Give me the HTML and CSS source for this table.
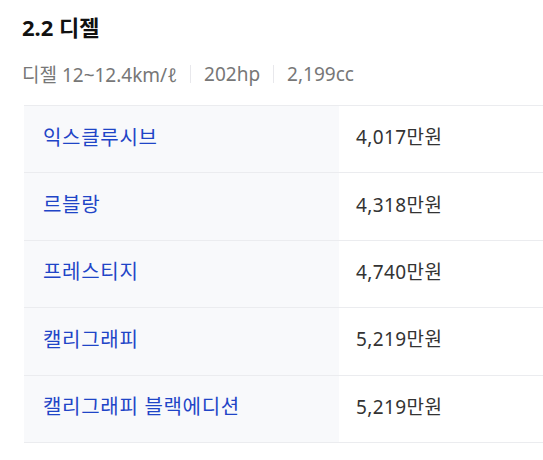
FILE: index.html
```html
<!DOCTYPE html>
<html lang="ko">
<head>
<meta charset="utf-8">
<link rel="stylesheet" href="styles.css">
</head>
<body>
<section class="trim">
  <h2 class="trim-title">2.2 디젤</h2>
  <div class="specs">
    <span class="spec">디젤 12~12.4km/ℓ</span>
    <span class="sep"></span>
    <span class="spec">202hp</span>
    <span class="sep"></span>
    <span class="spec">2,199cc</span>
  </div>
  <div class="price-table">
    <div class="row"><div class="name">익스클루시브</div><div class="price">4,017만원</div></div>
    <div class="row"><div class="name">르블랑</div><div class="price">4,318만원</div></div>
    <div class="row"><div class="name">프레스티지</div><div class="price">4,740만원</div></div>
    <div class="row"><div class="name">캘리그래피</div><div class="price">5,219만원</div></div>
    <div class="row"><div class="name">캘리그래피 블랙에디션</div><div class="price">5,219만원</div></div>
  </div>
</section>
</body>
</html>
```
FILE: styles.css
```css
html, body {
  margin: 0;
  padding: 0;
  background: #fff;
}
body {
  font-family: "Noto Sans", "Noto Sans CJK KR", sans-serif;
}
.trim {
  padding: 12px 0 0 22px;
}
.trim-title {
  margin: 0;
  font-size: 22px;
  font-weight: 700;
  line-height: 30px;
  color: #111;
}
.specs {
  display: flex;
  align-items: center;
  margin-top: 20px;
  height: 24px;
  font-size: 19px;
  color: #777;
}
.sep {
  width: 1px;
  height: 18px;
  background: #e8e8ec;
  margin: 0 13px 0 13px;
}
.price-table {
  margin: 19px 0 0 2px;
  border-top: 1px solid #ebecef;
}
.row {
  display: grid;
  grid-template-columns: 315px 1fr;
  height: 67.4px;
  box-sizing: border-box;
  border-bottom: 1px solid #ebecef;
  font-size: 19px;
}
.name {
  background: #f8f9fb;
  color: #1f45c7;
  display: flex;
  align-items: center;
  padding-left: 19px;
  padding-bottom: 6px;
  font-size: 20px;
  letter-spacing: 0.7px;
}
.price {
  color: #333;
  display: flex;
  align-items: center;
  padding-left: 17px;
  padding-bottom: 6px;
  letter-spacing: 0.4px;
}
```
